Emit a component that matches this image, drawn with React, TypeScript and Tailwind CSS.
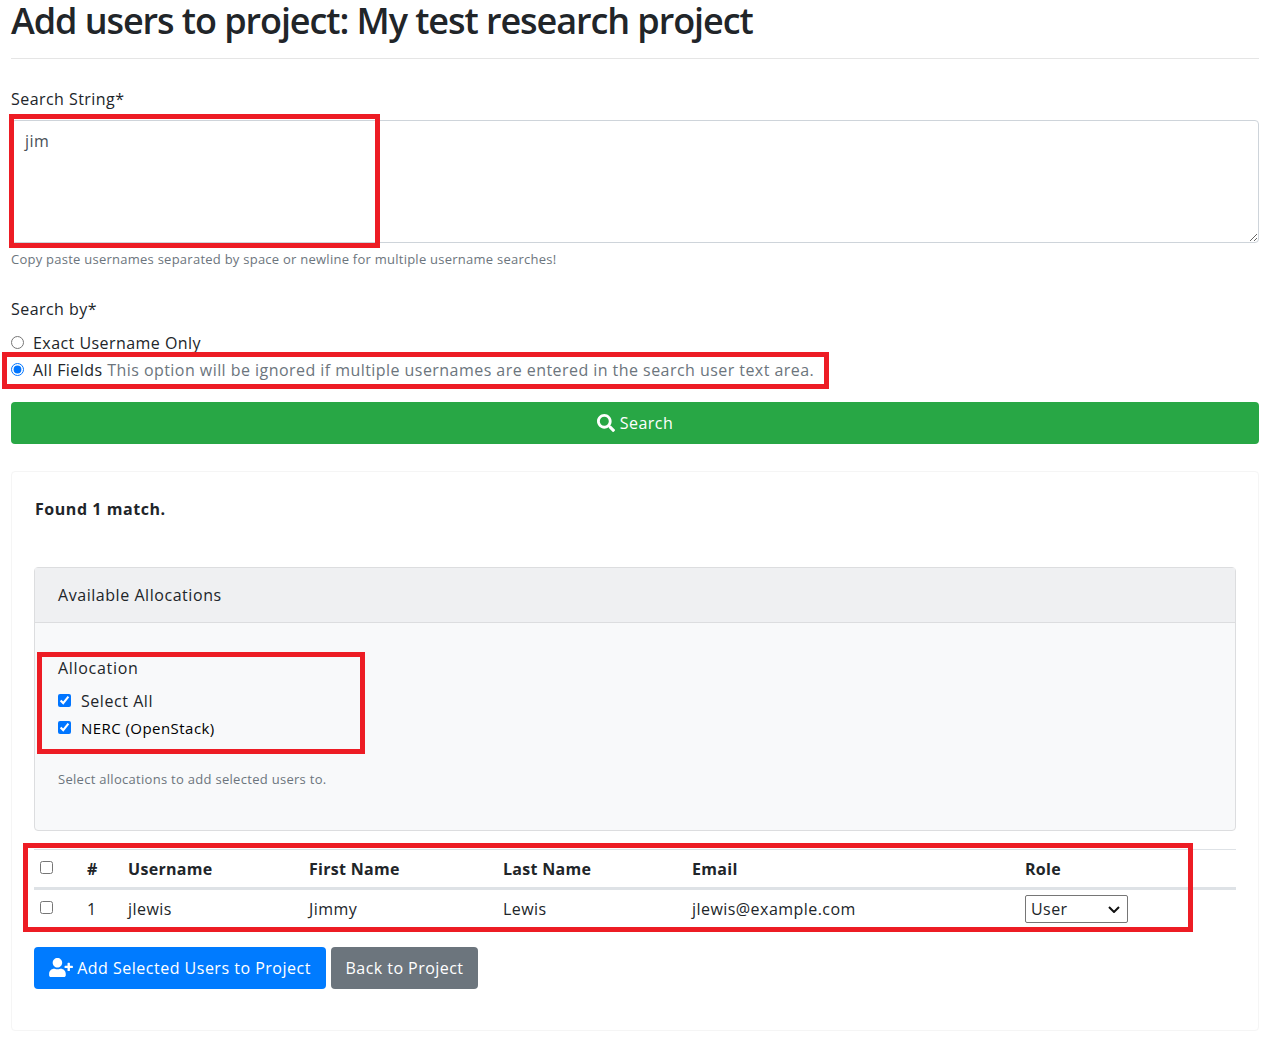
import React from 'react';
import { FaSearch, FaUserPlus } from 'react-icons/fa';

const columns = [
  { label: '#', width: 'w-[41px]' },
  { label: 'Username', width: 'w-[181px]' },
  { label: 'First Name', width: 'w-[194px]' },
  { label: 'Last Name', width: 'w-[189px]' },
  { label: 'Email', width: 'w-[333px]' },
  { label: 'Role', width: 'w-[223px]' },
];

function Highlight({ className }: { className: string }) {
  return <div className={`absolute border-[5px] border-[#ed1c24] pointer-events-none ${className}`} />;
}

export default function App() {
  return <div className="relative h-[1042px] overflow-hidden bg-white px-[11px] text-[16px] leading-6 tracking-[0.45px] text-[#212529] font-['Open_Sans',sans-serif]">
      <h1 className="h-[59px] border-b border-[#e5e5e5] text-[36px] font-[550] leading-[41px] tracking-[-1.07px]">
        Add users to project: My test research project
      </h1>

      {/* Search form */}
      <form className="pt-[28px]">
        <label className="block mb-[9px]">Search String*</label>
        <textarea defaultValue="jim" className="block w-full h-[123px] rounded border border-[#ced4da] pl-[13px] pr-3 py-[8px] text-[#495057]" />
        <p className="mt-[6px] h-[20px] text-[13px] leading-[20px] tracking-[0.25px] text-[#6c757d]">
          Copy paste usernames separated by space or newline for multiple username searches!
        </p>

        <label className="block mt-[28px] mb-[8px]">Search by*</label>
        <div className="mt-[10px] flex h-[24px] items-center gap-[9px]">
          <input type="radio" name="search_by" className="m-0 w-[13px] h-[13px] -translate-y-px" />
          <span>Exact Username Only</span>
        </div>
        <div className="mt-[3px] flex h-[24px] items-center gap-[9px]">
          <input type="radio" name="search_by" defaultChecked className="m-0 w-[13px] h-[13px] -translate-y-px" />
          <span>
            All Fields <span className="text-[#6c757d]">This option will be ignored if multiple usernames are entered in the search user text area.</span>
          </span>
        </div>
        <button type="button" className="mt-[20px] flex h-[42px] w-full items-center justify-center gap-[5px] rounded bg-[#28a745] text-white">
          <FaSearch className="w-[18px] h-[18px]" />
          Search
        </button>
      </form>

      {/* Results card */}
      <div className="mt-[27px] h-[560px] rounded border border-[#f5f5f5] px-[22px] pt-[25px]">
        <p className="h-[24px] pl-px font-bold tracking-[0.55px]">Found 1 match.</p>

        <div className="mt-[46px] h-[264px] rounded border border-[#dcdddf] bg-[#f8f9fa]">
          <div className="flex h-[55px] items-center border-b border-[#dcdddf] bg-[#eff0f2] px-[23px] tracking-[0.55px]">
            Available Allocations
          </div>
          <div className="px-[23px] pt-[33px]">
            <label className="block h-[24px] tracking-[0.7px]">Allocation</label>
            <div className="mt-[9px] flex h-[24px] items-center gap-[10px] tracking-[0.55px]">
              <input type="checkbox" defaultChecked className="m-0 w-[13px] h-[13px] -translate-y-px" />
              <span>Select All</span>
            </div>
            <div className="mt-[3px] flex h-[24px] items-center gap-[10px] text-[15px] text-black">
              <input type="checkbox" defaultChecked className="m-0 w-[13px] h-[13px] -translate-y-px" />
              <span>NERC (OpenStack)</span>
            </div>
            <p className="mt-[29px] text-[13px] leading-[20px] tracking-[0.29px] text-[#6c757d]">Select allocations to add selected users to.</p>
          </div>
        </div>

        <table className="mt-[18px] w-[1202px] table-fixed border-t border-[#dee2e6]">
          <thead>
            <tr className="h-[39px] border-b-[3px] border-[#dee2e6]">
              <th className="w-[41px] pl-[6px] text-left align-middle">
                <input type="checkbox" className="block m-0 w-[13px] h-[13px] -translate-y-px" />
              </th>
              {columns.map(col => <th key={col.label} className={`${col.width} pl-3 text-left font-bold tracking-[0.3px]`}>{col.label}</th>)}
            </tr>
          </thead>
          <tbody>
            <tr className="h-[39px]">
              <td className="pl-[6px]"><input type="checkbox" className="block m-0 w-[13px] h-[13px] -translate-y-px" /></td>
              <td className="pl-3">1</td>
              <td className="pl-3">jlewis</td>
              <td className="pl-3">Jimmy</td>
              <td className="pl-3">Lewis</td>
              <td className="pl-3">jlewis@example.com</td>
              <td className="pl-3">
                <div className="relative w-[103px]">
                  <select className="block w-full h-[28px] appearance-none rounded-[2px] border border-[#767676] bg-white pl-[5px] text-[16px]">
                    <option>User</option>
                  </select>
                  <svg viewBox="0 0 12 7" className="absolute right-[8px] top-[11px] w-[12px] h-[7px] pointer-events-none" fill="none" stroke="#111" strokeWidth="2">
                    <path d="M1 1l5 5 5-5" />
                  </svg>
                </div>
              </td>
            </tr>
          </tbody>
        </table>

        <div className="mt-[19px] flex gap-[5px]">
          <button type="button" className="flex h-[42px] w-[292px] items-center justify-center gap-[4px] rounded bg-[#007bff] tracking-[0.5px] text-white">
            <FaUserPlus className="w-[24px] h-[19px]" />
            Add Selected Users to Project
          </button>
          <button type="button" className="h-[42px] w-[147px] rounded bg-[#6c757d] text-white">Back to Project</button>
        </div>
      </div>

      {/* Red annotation boxes drawn over the screenshot */}
      <Highlight className="left-[9px] top-[114px] w-[371px] h-[134px]" />
      <Highlight className="left-[2px] top-[352px] w-[827px] h-[37px]" />
      <Highlight className="left-[37px] top-[652px] w-[328px] h-[102px]" />
      <Highlight className="left-[23px] top-[843px] w-[1170px] h-[89px]" />
    </div>;
}
